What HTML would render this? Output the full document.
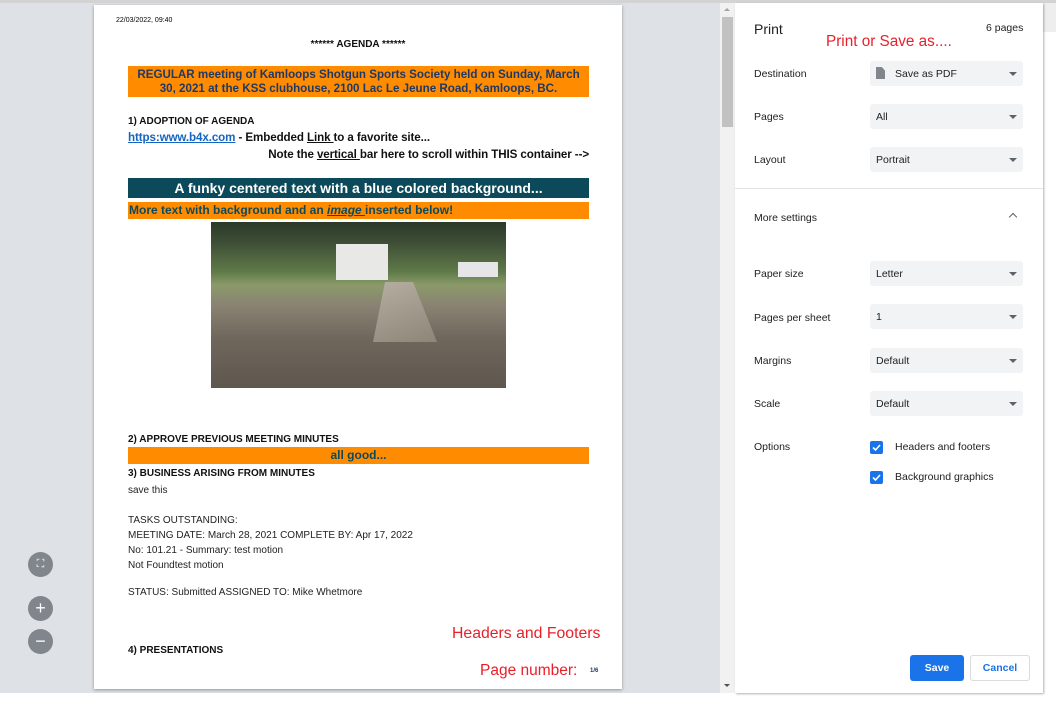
<!DOCTYPE html>
<html><head><meta charset="utf-8"><style>
*{margin:0;padding:0;box-sizing:border-box}
body{width:1056px;height:704px;overflow:hidden;background:#fff;font-family:"Liberation Sans",Arial,sans-serif;position:relative}
.a{position:absolute;white-space:nowrap}
.left{position:absolute;left:0;top:3px;width:720px;height:690px;background:#dee1e5}
.page{position:absolute;left:94px;top:5px;width:528px;height:684px;background:#fff;box-shadow:0 1px 3px rgba(0,0,0,.35)}
.b{font-weight:bold}
.org{position:absolute;left:128px;width:461px;background:#ff8c00}
.lbl{position:absolute;left:754px;font-size:10.5px;color:#202124}
.sel{position:absolute;left:870px;width:153px;height:25px;background:#f1f3f4;border-radius:3px;font-size:10.5px;color:#202124;padding:7px 0 0 6px}
.sel:after{content:"";position:absolute;right:6px;top:11px;border-left:4px solid transparent;border-right:4px solid transparent;border-top:4px solid #5f6368}
.cb{position:absolute;left:870px;width:13px;height:13px;background:#1a73e8;border-radius:2px}
.fab{position:absolute;left:28px;width:25px;height:25px;border-radius:50%;background:#80868b;color:#fff;text-align:center;font-size:18px;line-height:24px}
</style></head><body>
<div class="a" style="left:0;top:0;width:1056px;height:3px;background:#d3d3d3"></div>
<div class="left"></div>
<div class="a" style="left:1043px;top:3px;width:13px;height:29px;background:#eee"></div>
<div class="page"></div>
<div class="a" style="left:116px;top:17px;font-size:7px;color:#000">22/03/2022, 09:40</div>
<div class="a b" style="left:0;width:716px;text-align:center;top:39px;font-size:10px;color:#111">****** AGENDA ******</div>
<div class="org" style="top:66px;height:31px;color:#1f3864;font-size:11.6px;font-weight:bold;text-align:center;line-height:14px;padding-top:2px">REGULAR meeting of Kamloops Shotgun Sports Society held on Sunday, March<br>30, 2021 at the KSS clubhouse, 2100 Lac Le Jeune Road, Kamloops, BC.</div>
<div class="a b" style="left:128px;top:116px;font-size:10px;color:#111">1) ADOPTION OF AGENDA</div>
<div class="a b" style="left:128px;top:131px;font-size:11.6px;color:#111;letter-spacing:-0.1px"><span style="color:#1565c0;text-decoration:underline">https:www.b4x.com</span> - Embedded <u>Link </u>to a favorite site...</div>
<div class="a b" style="right:467px;top:148px;font-size:11.6px;color:#111;letter-spacing:-0.1px">Note the <u>vertical </u>bar here to scroll within THIS container --&gt;</div>
<div class="a" style="left:128px;top:178px;width:461px;height:20px;background:#0c4a5b;color:#fff;font-weight:bold;font-size:14px;text-align:center;line-height:20px">A funky centered text with a blue colored background...</div>
<div class="org" style="top:202px;height:17px;color:#0c4a5b;font-weight:bold;font-size:12px;line-height:17px;padding-left:1px">More text with background and an <i><u>image </u></i>inserted below!</div>
<div class="a" style="left:211px;top:222px;width:295px;height:166px;background:linear-gradient(180deg,#2b3a28 0%,#3d4d35 12%,#5f7a48 30%,#8b9a6a 38%,#8a8272 50%,#6f675c 70%,#5e574e 100%)">
<div class="a" style="left:125px;top:22px;width:52px;height:36px;background:#e8e8e6"></div>
<div class="a" style="left:146px;top:60px;width:80px;height:60px;background:linear-gradient(160deg,#b9b2a4,#8d8678);clip-path:polygon(35% 0,70% 0,100% 100%,20% 100%)"></div>
<div class="a" style="left:247px;top:40px;width:40px;height:15px;background:#e6e6e8"></div>
</div>
<div class="a b" style="left:128px;top:434px;font-size:10px;color:#111">2) APPROVE PREVIOUS MEETING MINUTES</div>
<div class="org" style="top:447px;height:17px;color:#0c4a5b;font-weight:bold;font-size:12px;text-align:center;line-height:17px">all good...</div>
<div class="a b" style="left:128px;top:468px;font-size:10px;color:#111">3) BUSINESS ARISING FROM MINUTES</div>
<div class="a" style="left:128px;top:485px;font-size:10px;color:#222">save this</div>
<div class="a" style="left:128px;top:513px;font-size:10px;color:#222;line-height:15px">TASKS OUTSTANDING:<br>MEETING DATE: March 28, 2021 COMPLETE BY: Apr 17, 2022<br>No: 101.21 - Summary: test motion<br>Not Foundtest motion</div>
<div class="a" style="left:128px;top:587px;font-size:10px;color:#222">STATUS: Submitted ASSIGNED TO: Mike Whetmore</div>
<div class="a b" style="left:128px;top:645px;font-size:10px;color:#111">4) PRESENTATIONS</div>
<div class="a" style="left:452px;top:625px;font-size:15.8px;color:#e8202a">Headers and Footers</div>
<div class="a" style="left:480px;top:662px;font-size:15.5px;color:#e8202a">Page number:</div>
<div class="a b" style="left:590px;top:668px;font-size:6px;color:#1f3864">1/6</div>
<div class="fab" style="top:552px;font-size:11px">⛶</div>
<div class="fab" style="top:596px">+</div>
<div class="fab" style="top:629px">−</div>
<!-- scrollbar -->
<div class="a" style="left:720px;top:3px;width:15px;height:690px;background:#f1f1f1"></div>
<div class="a" style="left:722px;top:17px;width:11px;height:110px;background:#c1c1c1"></div>
<div class="a" style="left:724px;top:8px;border-left:3px solid transparent;border-right:3px solid transparent;border-bottom:3px solid #a3a3a3"></div>
<div class="a" style="left:724px;top:684px;border-left:3px solid transparent;border-right:3px solid transparent;border-top:3px solid #505050"></div>
<!-- panel -->
<div class="a" style="left:735px;top:3px;width:308px;height:690px;background:#fff;box-shadow:1px 1px 2px rgba(0,0,0,.3)"></div>
<div class="a" style="left:754px;top:21px;font-size:14px;color:#202124">Print</div>
<div class="a" style="left:986px;top:22px;font-size:10.5px;color:#202124">6 pages</div>
<div class="a" style="left:826px;top:33px;font-size:15.3px;color:#e8202a">Print or Save as....</div>
<div class="lbl" style="top:68px">Destination</div>
<div class="sel" style="top:61px;padding-left:25px"><span style="position:absolute;left:6px;top:6px;width:9px;height:12px;background:#80868b;clip-path:polygon(0 0,65% 0,100% 30%,100% 100%,0 100%)"></span>Save as PDF</div>
<div class="lbl" style="top:111px">Pages</div><div class="sel" style="top:104px">All</div>
<div class="lbl" style="top:154px">Layout</div><div class="sel" style="top:147px">Portrait</div>
<div class="a" style="left:735px;top:188px;width:308px;height:1px;background:#e3e3e3"></div>
<div class="lbl" style="top:212px">More settings</div>
<div class="a" style="left:1010px;top:214px;width:6px;height:6px;border-left:1.5px solid #5f6368;border-top:1.5px solid #5f6368;transform:rotate(45deg)"></div>
<div class="lbl" style="top:268px">Paper size</div><div class="sel" style="top:261px">Letter</div>
<div class="lbl" style="top:312px">Pages per sheet</div><div class="sel" style="top:304px">1</div>
<div class="lbl" style="top:355px">Margins</div><div class="sel" style="top:348px">Default</div>
<div class="lbl" style="top:398px">Scale</div><div class="sel" style="top:391px">Default</div>
<div class="lbl" style="top:441px">Options</div>
<div class="cb" style="top:441px"><svg width="13" height="13"><path d="M3 6.5l2.5 2.5L10 4" stroke="#fff" stroke-width="1.6" fill="none"/></svg></div>
<div class="lbl" style="left:895px;top:441px">Headers and footers</div>
<div class="cb" style="top:471px"><svg width="13" height="13"><path d="M3 6.5l2.5 2.5L10 4" stroke="#fff" stroke-width="1.6" fill="none"/></svg></div>
<div class="lbl" style="left:895px;top:471px">Background graphics</div>
<div class="a b" style="left:910px;top:655px;width:54px;height:26px;background:#1a73e8;border-radius:3px;color:#fff;font-size:10.5px;text-align:center;line-height:26px">Save</div>
<div class="a b" style="left:970px;top:655px;width:60px;height:26px;border:1px solid #dadce0;border-radius:3px;color:#1a73e8;font-size:10.5px;text-align:center;line-height:24px">Cancel</div>
</body></html>
